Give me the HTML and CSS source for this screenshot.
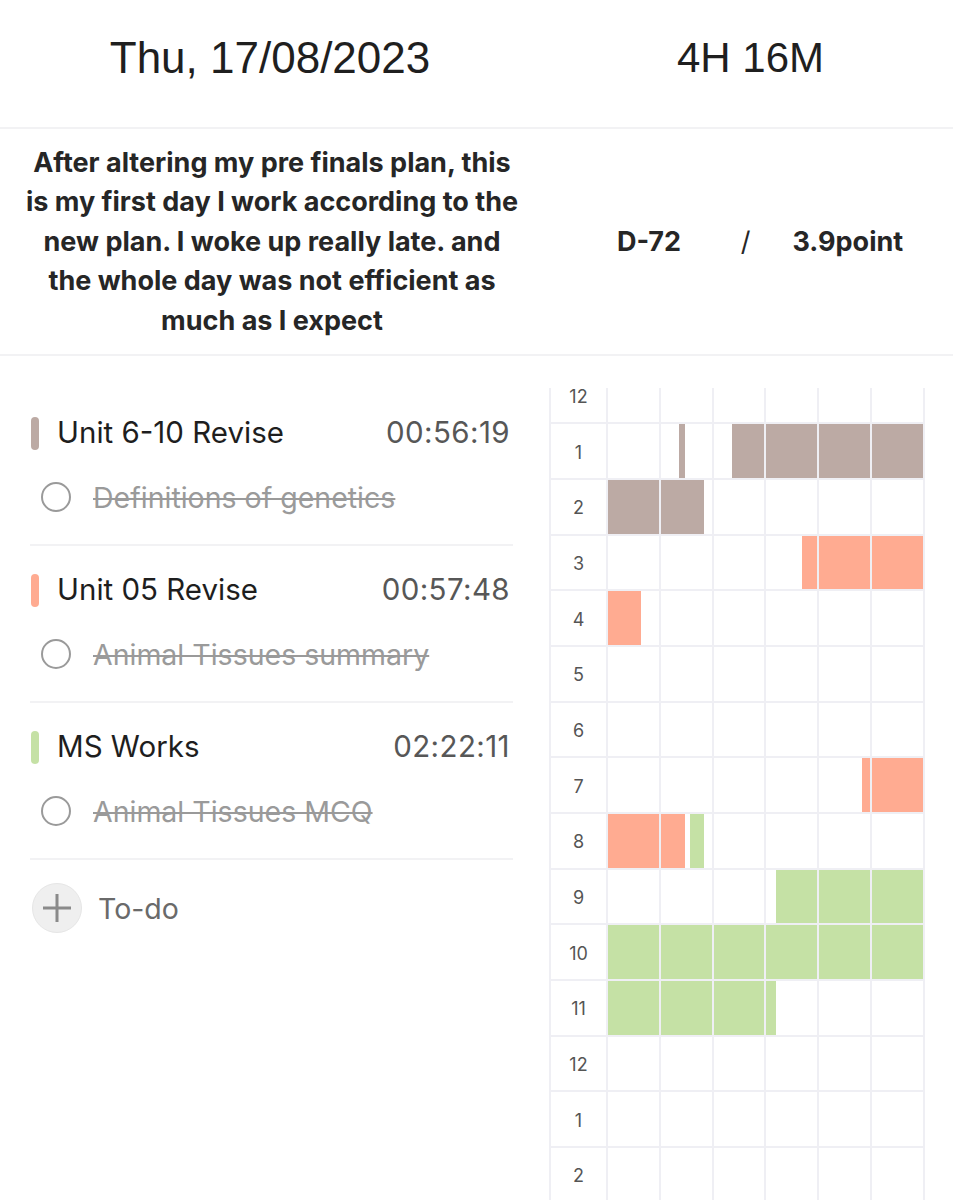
FILE: index.html
```html
<!DOCTYPE html>
<html>
<head>
<meta charset="utf-8">
<link rel="stylesheet" href="styles.css">
</head>
<body>
<div class="page">
  <header class="head">
    <div class="date">Thu, 17/08/2023</div>
    <div class="total">4H 16M</div>
  </header>
  <section class="summary">
    <p class="note">After altering my pre finals plan, this is my first day I work according to the new plan. I woke up really late. and the whole day was not efficient as much as I expect</p>
    <div class="stats">
      <span class="stat s1">D-72</span>
      <span class="slash">/</span>
      <span class="stat s3">3.9point</span>
    </div>
  </section>
  <main class="main">
    <div class="list">
      <div class="item">
        <div class="title-row">
          <span class="tag brown"></span>
          <span class="title">Unit 6-10 Revise</span>
          <span class="time">00:56:19</span>
        </div>
        <div class="sub-row">
          <span class="check"></span>
          <span class="sub">Definitions of genetics</span>
        </div>
      </div>
      <div class="item">
        <div class="title-row">
          <span class="tag salmon"></span>
          <span class="title">Unit 05 Revise</span>
          <span class="time">00:57:48</span>
        </div>
        <div class="sub-row">
          <span class="check"></span>
          <span class="sub">Animal Tissues summary</span>
        </div>
      </div>
      <div class="item">
        <div class="title-row">
          <span class="tag green"></span>
          <span class="title">MS Works</span>
          <span class="time">02:22:11</span>
        </div>
        <div class="sub-row">
          <span class="check"></span>
          <span class="sub">Animal Tissues MCQ</span>
        </div>
      </div>
      <div class="add-row">
        <span class="add-btn">
          <svg width="30" height="30" viewBox="0 0 30 30"><path d="M15 1v28M1 15h28" stroke="#8a8a8a" stroke-width="3" fill="none"/></svg>
        </span>
        <span class="add-label">To-do</span>
      </div>
    </div>
    <div class="timeline">
      <div class="grid">
        <div class="lbl">12</div><div class="c"></div><div class="c"></div><div class="c"></div><div class="c"></div><div class="c"></div><div class="c"></div>
        <div class="lbl">1</div><div class="c"></div><div class="c"><i class="bar brown" style="margin-left:35%;width:13%"></i></div><div class="c"><i class="bar brown" style="margin-left:37%;width:63%"></i></div><div class="c"><i class="bar brown" style="width:100%"></i></div><div class="c"><i class="bar brown" style="width:100%"></i></div><div class="c"><i class="bar brown" style="width:100%"></i></div>
        <div class="lbl">2</div><div class="c"><i class="bar brown" style="width:100%"></i></div><div class="c"><i class="bar brown" style="width:86%"></i></div><div class="c"></div><div class="c"></div><div class="c"></div><div class="c"></div>
        <div class="lbl">3</div><div class="c"></div><div class="c"></div><div class="c"></div><div class="c"><i class="bar salmon" style="margin-left:70%;width:30%"></i></div><div class="c"><i class="bar salmon" style="width:100%"></i></div><div class="c"><i class="bar salmon" style="width:100%"></i></div>
        <div class="lbl">4</div><div class="c"><i class="bar salmon" style="width:64%"></i></div><div class="c"></div><div class="c"></div><div class="c"></div><div class="c"></div><div class="c"></div>
        <div class="lbl">5</div><div class="c"></div><div class="c"></div><div class="c"></div><div class="c"></div><div class="c"></div><div class="c"></div>
        <div class="lbl">6</div><div class="c"></div><div class="c"></div><div class="c"></div><div class="c"></div><div class="c"></div><div class="c"></div>
        <div class="lbl">7</div><div class="c"></div><div class="c"></div><div class="c"></div><div class="c"></div><div class="c"><i class="bar salmon" style="margin-left:84%;width:16%"></i></div><div class="c"><i class="bar salmon" style="width:100%"></i></div>
        <div class="lbl">8</div><div class="c"><i class="bar salmon" style="width:100%"></i></div><div class="c"><i class="bar salmon" style="width:47%"></i><i class="bar green" style="margin-left:10%;width:28%"></i></div><div class="c"></div><div class="c"></div><div class="c"></div><div class="c"></div>
        <div class="lbl">9</div><div class="c"></div><div class="c"></div><div class="c"></div><div class="c"><i class="bar green" style="margin-left:18%;width:82%"></i></div><div class="c"><i class="bar green" style="width:100%"></i></div><div class="c"><i class="bar green" style="width:100%"></i></div>
        <div class="lbl">10</div><div class="c"><i class="bar green" style="width:100%"></i></div><div class="c"><i class="bar green" style="width:100%"></i></div><div class="c"><i class="bar green" style="width:100%"></i></div><div class="c"><i class="bar green" style="width:100%"></i></div><div class="c"><i class="bar green" style="width:100%"></i></div><div class="c"><i class="bar green" style="width:100%"></i></div>
        <div class="lbl">11</div><div class="c"><i class="bar green" style="width:100%"></i></div><div class="c"><i class="bar green" style="width:100%"></i></div><div class="c"><i class="bar green" style="width:100%"></i></div><div class="c"><i class="bar green" style="width:18%"></i></div><div class="c"></div><div class="c"></div>
        <div class="lbl">12</div><div class="c"></div><div class="c"></div><div class="c"></div><div class="c"></div><div class="c"></div><div class="c"></div>
        <div class="lbl">1</div><div class="c"></div><div class="c"></div><div class="c"></div><div class="c"></div><div class="c"></div><div class="c"></div>
        <div class="lbl">2</div><div class="c"></div><div class="c"></div><div class="c"></div><div class="c"></div><div class="c"></div><div class="c"></div>
        <div class="lbl">3</div><div class="c"></div><div class="c"></div><div class="c"></div><div class="c"></div><div class="c"></div><div class="c"></div>
      </div>
    </div>
  </main>
</div>
</body>
</html>
```
FILE: styles.css
```css
* { box-sizing: border-box; }
html, body { margin: 0; padding: 0; background: #fff; }
body { font-family: Inter, "Noto Sans", sans-serif; color: #222; }
.page { width: 953px; height: 1200px; overflow: hidden; }

.head {
  display: grid;
  grid-template-columns: 540px 1fr;
  align-items: center;
  height: 129px;
  border-bottom: 2px solid #f2f2f4;
  font-family: "Liberation Sans", Arial, sans-serif;
  color: #1f1f1f;
  padding-bottom: 12px;
}
.date { text-align: center; font-size: 44px; }
.total { text-align: center; font-size: 42px; padding-left: 8px; }

.summary {
  display: grid;
  grid-template-columns: 540px 1fr;
  align-items: center;
  height: 227px;
  border-bottom: 2px solid #f2f2f4;
}
.note {
  margin: 0 0 0 23px;
  width: 498px;
  text-align: center;
  font-weight: 700;
  font-size: 27px;
  line-height: 39.5px;
  color: #262626;
}
.stats {
  display: flex;
  font-weight: 700;
  font-size: 27px;
  color: #262626;
  padding-left: 59.5px;
}
.stats > span { text-align: center; }
.s1 { width: 99px; }
.slash { width: 94px; font-weight: 400; }
.s3 { width: 110px; }

.main { display: flex; }
.list { width: 540px; padding: 56px 27px 0 30px; }
.item { padding-top: 23px; padding-bottom: 27px; border-bottom: 2px solid #f2f2f4; }
.item:first-child { padding-top: 0; }
.title-row { display: flex; align-items: center; height: 40px; }
.tag { width: 8px; height: 33px; border-radius: 4px; margin: 2px 18px 0 1px; flex: none; }
.brown { background: #bcaaa4; }
.salmon { background: #ffab91; }
.green { background: #c5e1a5; }
.title { font-size: 29.5px; color: #1e1e1e; flex: 1; }
.time { font-size: 29.5px; color: #575757; letter-spacing: 0.4px; margin-right: 3px; }
.sub-row { display: flex; align-items: center; height: 40px; margin-top: 25px; }
.check {
  width: 30px; height: 30px; border-radius: 50%;
  border: 2.5px solid #9a9a9a;
  margin-left: 11px; margin-right: 22px; flex: none;
}
.sub { font-size: 28.5px; color: #9a9a9a; text-decoration: line-through; text-decoration-thickness: 2px; }
.add-row { display: flex; align-items: center; height: 50px; margin-top: 23px; }
.add-btn {
  width: 50px; height: 50px; border-radius: 50%;
  background: #efefef; border: 1px solid #e6e6e6;
  display: flex; align-items: center; justify-content: center;
  margin-left: 2px; margin-right: 16px;
}
.add-label { font-size: 28.5px; color: #6a6a6a; }

.timeline {
  margin-top: 32px;
  margin-left: 9px;
  height: 812px;
  overflow: hidden;
}
.grid {
  display: grid;
  grid-template-columns: 57px repeat(6, 52.8px);
  grid-auto-rows: 55.7px;
  margin-top: -19.5px;
  border-left: 2px solid #efeff4;
  width: 378px;
}
.lbl, .c { border-right: 2px solid #efeff4; border-bottom: 2px solid #efeff4; }
.lbl {
  display: flex; align-items: center; justify-content: center;
  font-size: 18px; color: #555; padding-top: 2px;
}
.c { display: flex; }
.bar { display: block; height: 100%; flex: none; }
```
